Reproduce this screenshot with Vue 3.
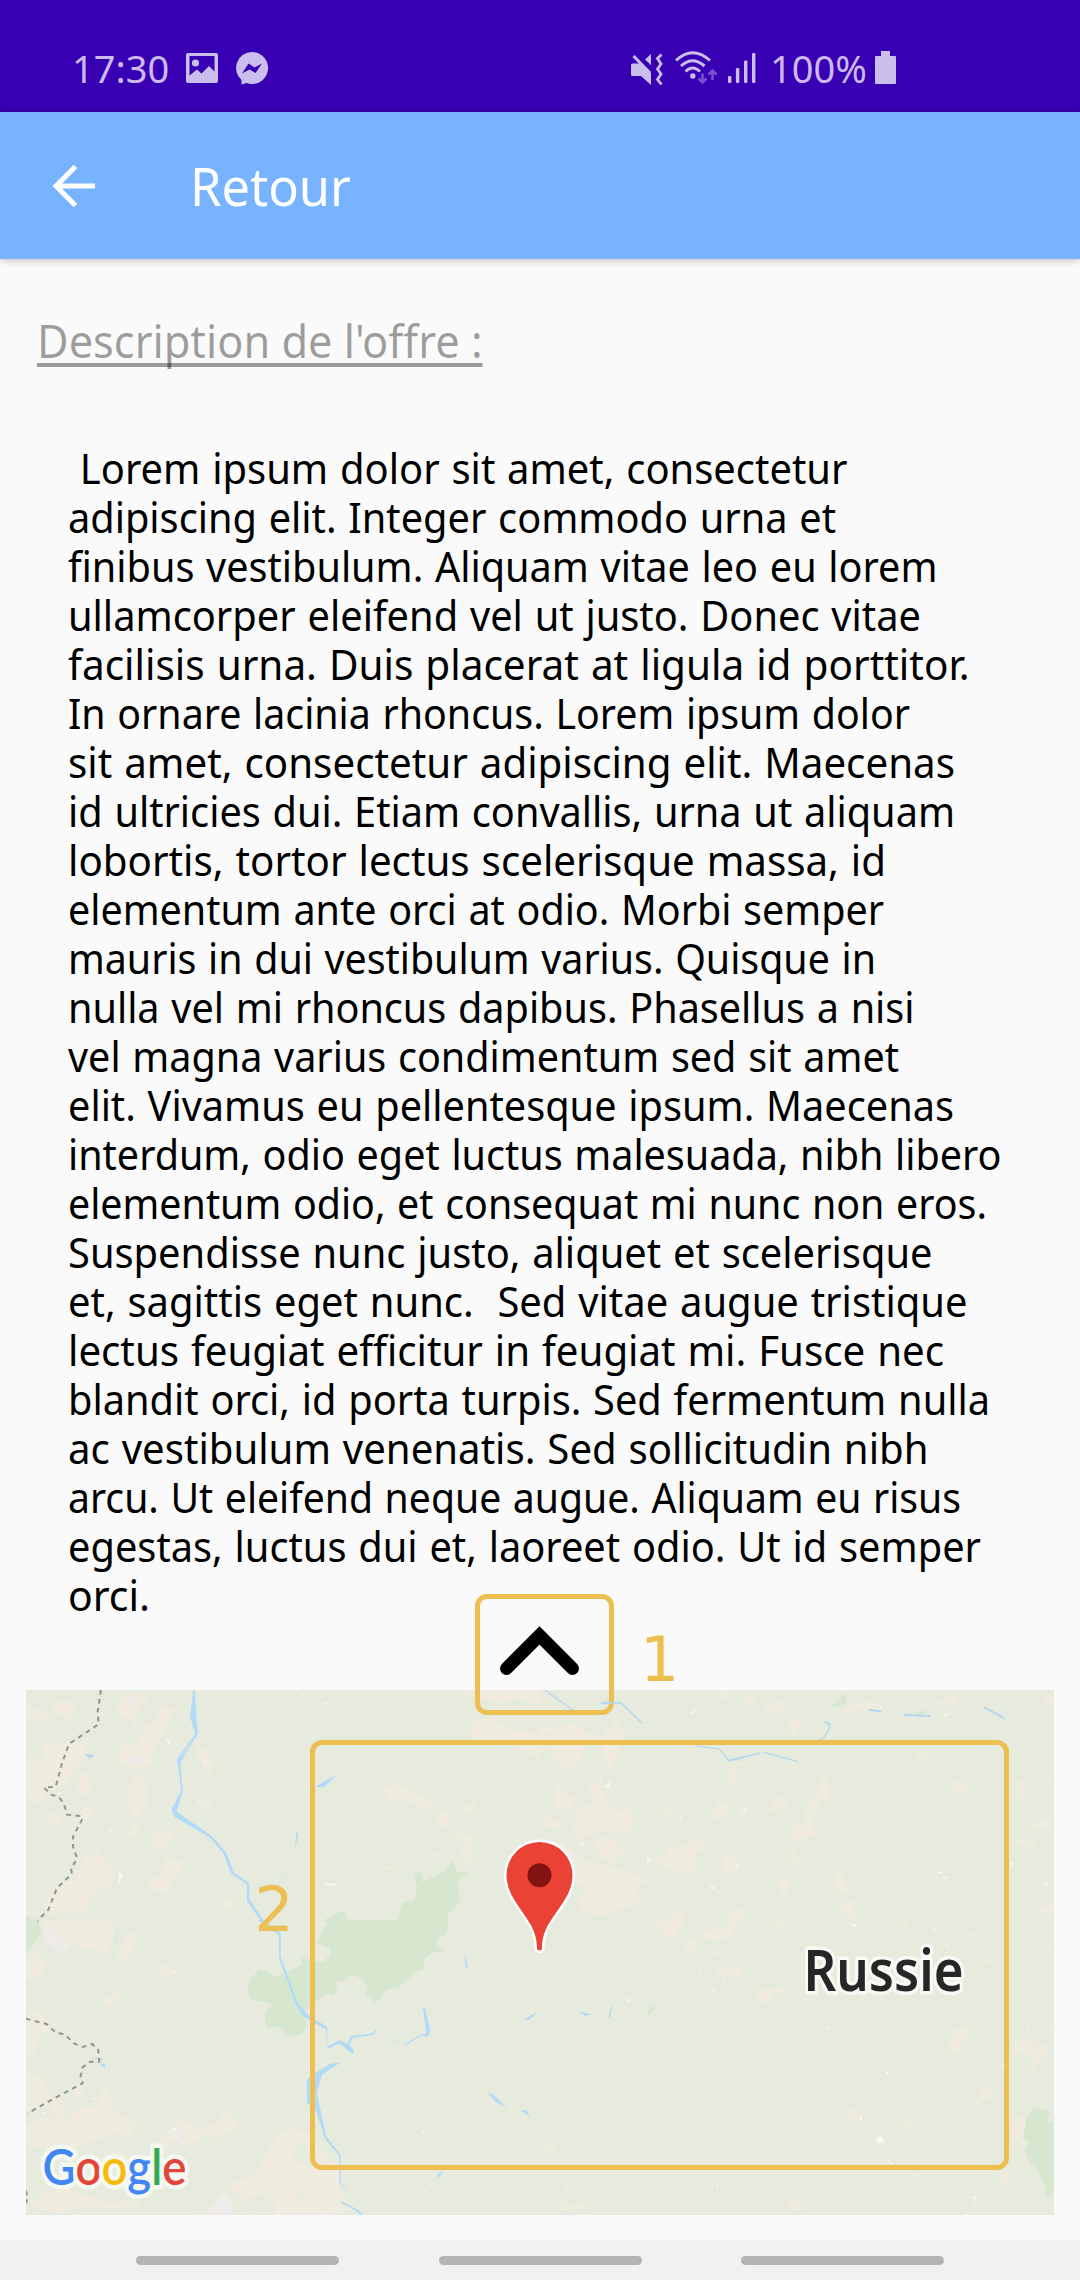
<script setup>
// Stretches a line of text horizontally to the given advance width.
const vFit = {
  mounted(el, { value }) {
    el.style.transform = `scaleX(${value / el.getBoundingClientRect().width})`
  }
}

const lines = [
  [' Lorem ipsum dolor sit amet, consectetur', 779.5],
  ['adipiscing elit. Integer commodo urna et', 768],
  ['finibus vestibulum. Aliquam vitae leo eu lorem', 869.5],
  ['ullamcorper eleifend vel ut justo. Donec vitae', 853],
  ['facilisis urna. Duis placerat at ligula id porttitor.', 901.5],
  ['In ornare lacinia rhoncus. Lorem ipsum dolor', 842],
  ['sit amet, consectetur adipiscing elit. Maecenas', 887],
  ['id ultricies dui. Etiam convallis, urna ut aliquam', 887],
  ['lobortis, tortor lectus scelerisque massa, id', 818],
  ['elementum ante orci at odio. Morbi semper', 816],
  ['mauris in dui vestibulum varius. Quisque in', 808],
  ['nulla vel mi rhoncus dapibus. Phasellus a nisi', 846.5],
  ['vel magna varius condimentum sed sit amet', 831],
  ['elit. Vivamus eu pellentesque ipsum. Maecenas', 886],
  ['interdum, odio eget luctus malesuada, nibh libero', 933.5],
  ['elementum odio, et consequat mi nunc non eros.', 919],
  ['Suspendisse nunc justo, aliquet et scelerisque', 864.5],
  ['et, sagittis eget nunc.  Sed vitae augue tristique', 899.5],
  ['lectus feugiat efficitur in feugiat mi. Fusce nec', 876],
  ['blandit orci, id porta turpis. Sed fermentum nulla', 922],
  ['ac vestibulum venenatis. Sed sollicitudin nibh', 860.5],
  ['arcu. Ut eleifend neque augue. Aliquam eu risus', 893],
  ['egestas, luctus dui et, laoreet odio. Ut id semper', 913],
  ['orci.', 82]
]
</script>

<template>
  <div class="screen">
    <header class="status">
      <span v-fit="96" class="st clock">17:30</span>
      <svg class="i-img" width="32" height="30" viewBox="0 0 32 30">
        <path fill-rule="evenodd" d="M2 0H30Q32 0 32 2V28Q32 30 30 30H2Q0 30 0 28V2Q0 0 2 0ZM3.500 3V22.500L11 16.500L15.500 20.500L23 13L28.500 18.500V3Z" />
        <circle cx="9.500" cy="10" r="3.600" />
      </svg>
      <svg class="i-msg" width="32" height="33" viewBox="0 0 32 33">
        <path d="M16 0A16 16 0 1 1 10.500 31L5.500 32.500L5.500 28A16 16 0 0 1 16 0Z" />
        <path class="cut" d="M6 21.500L12.500 11.500L18.500 15.500L26 11.500L19.500 21L13.500 17.500Z" />
      </svg>
      <span class="grow"></span>
      <svg class="i-mute" width="32" height="33" viewBox="0 0 32 33">
        <path d="M0 12Q0 10.500 1.500 10.500H8.500L20 20V32L10 23H1.500Q0 23 0 21.500ZM14 6.500L20 1V12Z" />
        <path class="ln" d="M2.500 3L19 20" stroke-width="3" />
        <path class="ln" d="M30.500 1.500L26.500 5.500L30 11L26.500 16L30 21L26.500 26.500L30.500 31.500" stroke-width="2.800" />
      </svg>
      <svg class="i-wifi" width="42" height="33" viewBox="0 0 42 33">
        <path class="ln" stroke-width="3" d="M1 9.500Q17.500 -6 35 9.500M6 15Q17.500 4.500 29.500 15M10.500 20.500Q17.500 13.500 25 20.500" />
        <circle cx="17.800" cy="25" r="2.700" />
        <path class="ln dim" stroke-width="2.600" d="M27.500 22.500V31M23.500 27.500L27.500 31.500L31.500 27.500M37.500 29V20M33.500 23.500L37.500 19.500L41.500 23.500" />
      </svg>
      <svg class="i-sig" width="28" height="30" viewBox="0 0 28 30">
        <rect y="23" width="3.400" height="7" rx="1" /><rect x="7.900" y="15" width="3.400" height="15" rx="1" />
        <rect x="16" y="7.500" width="3.400" height="22.500" rx="1" /><rect x="24" width="3.400" height="30" rx="1" />
      </svg>
      <span v-fit="101" class="st pct">100%</span>
      <svg class="i-bat" width="21" height="33" viewBox="0 0 21 33">
        <path d="M6 0H15V5H20Q21 5 21 6V32Q21 33 20 33H1Q0 33 0 32V6Q0 5 1 5H6Z" />
      </svg>
    </header>

    <nav class="bar">
      <svg width="42" height="42" viewBox="0 0 42 42">
        <path d="M22.500 1.500L3 21L22.500 40.500M3 21H42" fill="none" stroke="#fff" stroke-width="5" />
      </svg>
      <span v-fit="161" class="bar-title">Retour</span>
    </nav>

    <main>
      <div class="heading"><span v-fit="445.500">Description de l'offre :</span></div>
      <div class="text">
        <div v-for="[t, w] in lines" :key="t" class="line"><span v-fit="w">{{ t }}</span></div>
      </div>

      <div class="map">
        <svg class="canvas" width="1028" height="525" viewBox="0 0 1028 525">
          <rect width="1028" height="525" fill="#e6ebdd" />
          <!-- north-west quadrant -->
          <g transform="translate(-26 -130) scale(.34438 .33333)">
            <g fill="#efebdf">
              <path d="M75 420L110 450L150 470L140 480L75 475ZM155 425L215 422L222 450L205 480L160 460ZM355 400L450 392L400 450L395 490L345 465L340 435ZM470 435L508 445L480 510L445 570L440 610L400 635L345 605L342 560L400 545L420 500L450 485ZM115 540L160 560L200 545L250 550L252 600L215 630L200 665L140 700L110 735L75 710V600L130 590ZM235 630L260 655L265 705L220 700ZM395 640L425 670L425 740L395 772L368 740L372 690ZM572 548L600 570L620 620L615 645L600 640L575 590ZM575 725L605 722L622 740L605 750ZM140 755L175 775L180 790L160 800L135 780ZM255 735L278 745L240 790L210 780ZM390 782L410 810L390 838L370 825ZM445 820L500 812L505 835L470 865L440 868L440 845ZM283 870L340 945L325 975L265 1000L250 1055L190 1050L160 1075L125 1040L160 980L215 950L240 900ZM480 895L540 905L505 960L480 1000L445 990L425 965L470 940ZM660 1012L683 1030L660 1050L643 1035Z" />
              <path d="M1310 390H1568V435L1500 415L1440 430L1390 415ZM1375 485L1430 470L1470 505L1568 520V600L1500 560L1390 540L1362 520ZM1180 392H1222L1205 418ZM1110 690L1155 672L1210 700L1265 735L1220 750L1180 715L1140 730ZM1280 750L1308 760L1305 785L1280 810L1268 790ZM1325 820L1370 825L1372 880L1358 910L1338 900L1345 850ZM1110 925L1155 912L1135 932ZM1380 720L1385 740L1350 765L1340 750Z" />
            </g>
            <path fill="#efebe8" d="M375 410L410 405L365 445ZM370 600L395 585L415 600L390 620Z" />
            <path fill="#d7e7cf" d="M940 1080L1000 1050L1010 1080ZM1150 1090L1168 1030L1202 1020L1210 980L1202 935L1227 940V965L1290 935L1314 902L1330 937L1362 935L1330 965L1336 1025L1300 1060L1305 1090ZM75 1065L100 1080H75Z" />
            <g fill="#b0daf8">
              <path d="M561 390L566 391L570 470L574 522L526 605L524 625L531 690L513 755L615 828L657 878L679 938L724 970L724 1016L765 1080H755L717 1022L717 973L672 942L650 882L608 832L508 772L498 750L526 690L518 625L513 600L567 522L552 470Z" />
              <path d="M247 582L275 585L261 597ZM914 682L940 665L977 645L942 680ZM860 820L867 816L863 840L857 864Z" />
            </g>
            <path fill="#e6ebdd" d="M563 538L530 590L526 595L545 560Z" />
            <path fill="none" stroke="#b9dcef" stroke-width="2" d="M824 948L806 975" />
            <path class="speck" d="M380 490L398 508L392 508ZM482 530L495 545L488 556ZM716 563L744 580L738 580ZM935 428L953 426L945 433ZM872 406L890 401L880 408ZM1244 452L1250 445L1248 456ZM588 600L600 608L596 615ZM1252 882L1275 880L1260 886ZM938 972L958 970L980 973L965 978ZM345 940L358 938L345 975ZM165 700L178 693L170 706ZM571 728L583 722L580 730ZM805 598V612H802ZM730 615L726 645L729 643ZM1003 742L1006 750L1000 748ZM312 808L333 813L325 816ZM1278 625L1283 632L1277 630ZM490 403L498 410L492 410Z" />
            <path class="border" d="M293 390L283 460L287 492L200 552L180 610L162 680L128 683L148 704L170 710L185 730L195 764L235 768L240 775L212 830L212 860L224 895L207 925L208 942L165 985L140 1050L108 1082L112 1115L82 1135" />
          </g>
          <!-- south-west quadrant -->
          <g transform="translate(-26 230) scale(.34438 .33333)">
            <g fill="#efebdf">
              <path d="M125 0H325L328 70L305 95L240 85L210 70L180 90L150 70L115 30ZM375 40L402 45L385 85L355 130L340 115L355 70ZM75 110L100 95L130 115L125 170L75 178ZM460 138L480 130L510 155L490 172L458 158ZM295 245L330 220L352 222L345 240L315 262ZM75 290L110 268L150 330L110 350L100 400L75 418ZM75 460L120 465L130 500L160 535L185 540L185 600L160 590L150 560L120 560L110 580L75 570ZM210 495L260 490L218 545ZM300 500L320 515L322 560L380 605L410 610L370 650L335 640L215 680L130 690L75 670V615L130 590L190 600L240 560L280 560ZM655 568L685 600L690 628L650 640L630 665L600 640L565 668L530 680L535 640L500 660L470 700L440 690L480 640L520 600L580 625L635 605Z" />
              <path d="M850 625L905 640L925 690L990 740L988 800L1020 865L975 884H795L800 850L760 820L715 840L690 815L655 800L690 780L740 770L770 700L820 635ZM180 800L270 830L320 850L410 840L400 860L290 865L230 860L180 884L100 862L90 845L130 820ZM290 715L330 690L370 705L360 730L310 735ZM560 884L620 868L600 884Z" />
            </g>
            <path fill="#efebe8" d="M130 15L180 65L210 85L165 95L130 55ZM490 630L515 625L545 680L520 670ZM650 815L680 855L670 884H590L620 855ZM75 620L105 660L90 665L75 650Z" />
            <path fill="#e6ebdd" d="M870 660L905 700L900 740L850 720ZM875 808L890 840L858 835Z" />
            <path fill="#d7e7cf" d="M75 0H108L122 35L75 98ZM918 70L950 10L938 0H1302L1298 40L1268 58L1270 75L1290 95L1255 98L1235 115L1228 150L1212 152L1165 195L1160 205L1122 208L1100 242L1088 247L1065 225L1060 215L1068 210L1052 178L1020 162L1005 182L970 188L982 208L965 228L945 220L915 247L888 272L890 318L880 338L853 353L828 342L808 320L775 323L769 305L770 275L797 250L735 243L722 228L720 200L728 175L755 147L802 170L875 135V112L905 122L940 125L962 98L958 85Z" />
            <g fill="#b0daf8">
              <path d="M748 0H765L815 40V110L865 250L900 290L950 320V380L985 360L1008 372L1020 347L1080 341L1101 321L1083 345L1024 353L1014 375L1028 390L1024 403L985 370L950 388L946 328L905 304L880 288L857 250L810 115V45Z" />
              <path d="M990 427L958 448L934 465L920 520L948 650L989 704V788L1013 818L985 790V708L944 656L918 575L891 548V480L910 462L958 432ZM345 0L339 60L334 88L340 40ZM1228 264H1234L1250 330L1242 350L1225 346L1172 380L1175 373L1225 342H1238L1236 325ZM1350 100L1357 130L1359 147L1351 138ZM1417 520L1430 522L1473 564L1440 545ZM1512 570H1528L1540 591ZM1522 298L1562 275L1536 300ZM1288 750L1280 765L1266 779L1274 760ZM992 844L1040 870L1055 884H1045L1035 873L990 848ZM272 414H298L295 422ZM290 433L308 430L303 444Z" />
            </g>
            <path fill="none" stroke="#b9dcef" stroke-width="2" d="M1138 352L1160 370" />
            <path class="speck" d="M390 365L402 370L395 372ZM778 496L792 508L785 505ZM575 450L582 458L576 458ZM1225 632L1235 625L1230 638ZM1326 616H1336V619H1326ZM1250 790L1258 798L1253 802ZM500 158L508 148L506 158ZM355 130L362 135L357 139ZM265 533L280 536L272 540ZM500 628L515 621L508 633ZM1472 58L1492 55L1480 60ZM1343 518L1348 526L1344 524ZM735 872L743 875L738 877ZM940 884L948 878V884ZM733 298L740 305L735 303ZM120 580L137 576L125 584ZM280 392L288 405L278 405Z" />
            <path class="border" d="M75 296L135 312L162 338L188 343L215 370L240 381L268 372L285 390L288 425L262 425L240 442L234 470L240 490L170 528L80 580M75 812L80 830L76 850" />
          </g>
          <!-- north-east quadrant -->
          <g transform="translate(514 -130) scale(.34438 .33333)">
            <g fill="#efebdf">
              <path d="M0 500L55 505L100 485L130 515L165 535L135 565L110 600L80 640L50 610L30 570L0 560ZM175 535L220 480L250 520L235 565L205 632L185 590ZM45 670L100 715L95 745L40 750ZM140 670H175L190 720L220 750L240 760L270 735L270 800L255 825L170 810L110 840L85 825L105 785L95 755L150 730ZM0 830L90 860L130 910L180 870L150 850L200 825L250 880L200 915L270 945L320 960L280 985L290 1030L220 1050L180 1068L120 1050L105 1025L135 990L95 960L60 880L0 860ZM10 765L60 790L55 810L5 795ZM310 895L360 890L375 865L440 850V825L490 850L450 885L460 930L400 940ZM490 765L520 725L560 735L540 770L510 780ZM570 760L595 750L602 770L585 782ZM670 720L720 708L725 725L690 755L660 750L680 735ZM825 635L840 680L842 725L815 725L795 760L790 795L810 830L780 825L745 850L720 820L735 795L770 785L775 735L805 715ZM530 885L570 895L575 925L545 940L528 920ZM865 935L885 945L890 980L918 1000L865 995L850 960ZM715 885L735 870L752 890L740 910ZM1190 675L1215 658L1248 680L1225 712L1205 700ZM1382 668L1415 662L1395 722L1382 715ZM1425 795L1492 765L1475 800L1445 810ZM1385 835L1440 850L1435 868L1382 855ZM1460 400L1492 405V438L1465 425ZM1150 430L1190 402L1218 405L1200 432L1165 438ZM870 450L920 432L970 422L998 440L990 455L930 448L890 462ZM590 415L620 402L630 425L605 435ZM645 425L670 435L708 415L705 450L680 465L660 455ZM720 475L758 480L740 530L730 530ZM1090 605L1100 575L1140 595ZM500 390H555L530 425ZM540 625L575 630L570 675L550 668ZM550 615L640 595L610 615ZM860 1035L910 1030L920 1080H900ZM1450 1040L1492 1035V1065L1455 1060ZM540 1060L580 1045L600 1065L570 1080H550ZM690 965L728 960L715 1005L695 995ZM385 1055L420 1065L415 1080H385ZM350 740L390 755L375 770ZM320 575L350 560L335 585Z" />
            </g>
            <path fill="#e6ebdd" d="M140 900L175 890L200 910L170 920Z" />
            <path fill="#d7e7cf" d="M836 446L889 400V433ZM1090 460L1123 450L1115 467Z" />
            <g fill="none" stroke="#b4d9ef" stroke-width="4">
              <path d="M15 391L100 454M810 540L826 532L843 500L828 484M450 557L522 567L549 603L640 579M650 577L750 605" />
              <path stroke-width="6" d="M549 602L590 591M826 485L842 494M955 449L993 455M1055 464L1135 469M1290 442L1349 475" />
            </g>
            <path class="speck" d="M435 460L453 444L445 460ZM180 680L200 670L205 655L203 684ZM168 662L180 660L176 668ZM310 890L322 902L312 912ZM116 845L135 850L122 857ZM585 740L600 747L597 756ZM567 912L580 913L572 922ZM493 975L511 985L500 988ZM1170 468L1188 456L1180 468ZM1467 666L1492 670L1475 670ZM1363 905L1374 908L1366 922ZM1152 936L1170 937L1160 941ZM1165 950L1190 953L1175 956ZM1464 965L1475 968L1468 977ZM405 765L412 775L408 782ZM15 495L22 508L18 515ZM1093 735L1118 733L1105 737ZM1315 1010L1320 1020L1316 1022ZM915 740L922 743L916 745ZM355 738L362 733L360 740ZM325 840L340 835L330 842ZM407 570L435 583L425 580ZM895 1026L915 1028L905 1030Z" />
          </g>
          <!-- south-east quadrant -->
          <g transform="translate(514 230) scale(.34438 .33333)">
            <g fill="#efebdf">
              <path d="M330 0H425L380 60L345 25ZM480 35L550 15L545 0H575L560 45L520 65L475 55ZM425 60L455 55L460 80L440 105L422 90ZM490 92L548 96L510 108ZM500 155L545 138L590 142L585 170L545 165L530 195L525 170ZM628 205L665 210L705 195L712 215L680 222L655 252L630 235ZM685 0H720L695 25ZM1050 0H1072L1062 28ZM1275 125L1300 110L1315 122L1290 132ZM1195 345L1225 322L1248 325L1240 350L1218 370L1222 385L1208 405L1188 385ZM1385 358L1430 360L1440 380L1472 375L1475 405L1445 435L1430 462L1422 450L1435 425L1410 395L1365 412ZM1275 518L1300 505L1325 520L1320 535H1280ZM1258 540L1275 533L1282 550L1265 560ZM885 580L905 565L930 585L925 600L895 597ZM1038 605L1080 602L1075 625ZM1370 600L1395 590L1412 605L1402 655L1420 668L1405 688L1390 665L1368 668ZM1335 755H1358L1355 795L1333 790ZM1380 775L1388 765L1395 780ZM712 850L735 835L763 855L755 872L735 868ZM45 825L70 835L80 860L115 845L140 865L100 865L95 882L65 865ZM15 680L45 672L50 690L20 705ZM1470 320L1492 308V330H1475ZM1455 80L1492 78V90Z" />
            </g>
            <path fill="#d7e7cf" d="M1433 560L1482 573L1470 605H1492V820L1470 834L1467 800L1440 737L1422 728L1408 688L1420 668L1402 655L1412 600ZM320 257L337 265L311 289Z" />
            <path fill="#b4d9ef" d="M110 273L151 283L133 288ZM213 252L203 293H199L202 275Z" />
            <path class="speck" d="M975 660L990 648L1000 668H988L978 668ZM1028 735L1005 712L1015 728ZM1435 30L1455 45L1442 40ZM505 270L524 284L512 278ZM498 203L508 215L505 220ZM308 208L313 196L312 208ZM250 240L264 236L262 248ZM792 306L805 297L798 306ZM828 325L845 317L838 325ZM1002 462L1008 452L1014 462ZM1010 563L1027 538L1018 555ZM945 535L951 555L947 557ZM1045 520L1055 510L1050 522ZM928 600L935 585V600ZM1080 765L1098 769H1085ZM513 790L518 793L516 808ZM502 852L511 838L508 848ZM1065 855L1070 862L1063 863ZM1255 832L1272 828L1262 840ZM1258 856L1268 848L1263 858ZM1232 884L1243 878V884ZM60 790L88 815L80 812ZM1140 20L1150 27L1145 32ZM985 352L1000 362L992 360ZM1410 335L1418 318L1414 335ZM690 698L700 692L695 700ZM0 780L10 785L8 790ZM237 437L243 428L240 438ZM492 437L497 428L496 440ZM1338 435H1348V443ZM460 155L470 157L466 161ZM1175 70L1188 78L1180 80ZM900 15L920 13L915 20ZM1198 338L1218 328L1208 338ZM1250 35L1268 48L1258 45ZM1240 582L1253 580L1248 585ZM1400 233L1406 240L1402 244Z" />
          </g>
          <text class="country" x="777.500" y="300.500" textLength="160" lengthAdjust="spacingAndGlyphs">Russie</text>
          <g class="logo">
            <text x="16.500" y="495" textLength="144" lengthAdjust="spacingAndGlyphs"><tspan fill="#4285f4">G</tspan><tspan fill="#e2453a">o</tspan><tspan fill="#f9bb0b">o</tspan><tspan fill="#4285f4">g</tspan><tspan fill="#34a853">l</tspan><tspan fill="#e2453a">e</tspan></text>
          </g>
          <path class="pin" d="M480.500 185C480.500 192 482.500 199 485.500 205C497 226 511 236 511 258Q511 260.500 513.500 260.500T516 258C516 236 530 226 541.500 205C544.500 199 546.500 192 546.500 185A33 33 0 0 0 480.500 185Z" />
          <circle cx="513.500" cy="185.300" r="12" fill="#821411" />
        </svg>

        <div class="mark one">
          <svg width="79" height="52" viewBox="0 0 79 52">
            <path d="M6.500 42.500L39.500 9.500L72.500 42.500" fill="none" stroke="#000" stroke-width="13" stroke-linecap="round" />
          </svg>
        </div>
        <div class="mark two"></div>
        <svg class="brook" width="45" height="34" viewBox="0 0 45 34">
          <path d="M0 10H20L41 30" fill="none" stroke="#b4d9ef" stroke-width="1.600" />
          <path d="M0 10L5 8.500H9V11L0 11.500Z" fill="#b4d9ef" />
        </svg>
        <span class="num n1">1</span>
        <span class="num n2">2</span>
      </div>
    </main>

    <footer class="keys"><i></i><i></i><i></i></footer>
  </div>
</template>

<style>
body { margin: 0; }
</style>

<style scoped>
.screen {
  width: 1080px;
  height: 2280px;
  display: flex;
  flex-direction: column;
  background: #fafafa;
  font-family: "Noto Sans", "Open Sans", sans-serif;
  overflow: hidden;
}
.screen span { white-space: pre; }
.status {
  height: 112px;
  box-sizing: border-box;
  padding: 51px 184px 0 72px;
  display: flex;
  align-items: flex-start;
  background: #3700b3;
  color: #cdb8f2;
}
.status svg { fill: #cbbdec; flex: none; overflow: visible; }
.status .ln { fill: none; stroke: #cbbdec; }
.status .dim { stroke: #7a4fd0; }
.status .cut { fill: #3700b3; }
.st { font-size: 38px; line-height: 38px; transform-origin: 0 0; flex: none; }
.clock { width: 96px; margin-top: -2px; }
.i-img { margin: 2px 0 0 18px; }
.i-msg { margin: 1px 0 0 18px; }
.grow { flex: 1; }
.i-mute { margin-top: 2px; }
.i-wifi { margin-left: 12px; }
.i-sig { margin: 2px 0 0 11px; }
.pct { width: 101px; margin: -2px 0 0 14px; }
.i-bat { margin-left: 4px; }
.bar {
  height: 147px;
  box-sizing: border-box;
  padding-left: 53px;
  display: flex;
  align-items: center;
  flex: none;
  background: #77b3ff;
  box-shadow: 0 1px 8px rgba(0, 0, 0, .25);
}
.bar-title {
  margin: 1px 0 0 94.500px;
  font-size: 52px;
  line-height: 70px;
  color: #fff;
  transform-origin: 0 0;
}
main { flex: 1; display: flex; flex-direction: column; }
.heading {
  margin: 51px 0 0 37px;
  height: 60px;
  font-size: 45.500px;
  line-height: 60px;
  color: rgba(0, 0, 0, .38);
}
.heading span {
  display: inline-block;
  transform-origin: 0 0;
  text-decoration: underline;
  text-decoration-thickness: 4px;
  text-underline-offset: 5px;
  text-decoration-skip-ink: none;
}
.text { margin: 74px 0 0 68px; font-size: 41px; word-spacing: 1.500px; color: #000; }
.line { height: 49px; line-height: 49px; }
.line span { display: inline-block; transform-origin: 0 0; }
.map { position: relative; width: 1028px; height: 525px; margin: 70px 0 0 26px; }
.canvas { display: block; }
.border { fill: none; stroke: #92968d; stroke-width: 6; stroke-dasharray: 14 13; }
.speck { fill: #fbfbf9; opacity: .8; }
.country {
  font: 600 57px "Noto Sans", sans-serif;
  fill: #262626;
  stroke: #f8f9f4;
  stroke-width: 7;
  stroke-linejoin: round;
  paint-order: stroke;
}
.logo text {
  font: 600 49px Lato, sans-serif;
  stroke: #f5f7f1;
  stroke-width: 9;
  stroke-linejoin: round;
  paint-order: stroke;
}
.pin { fill: #ea4335; stroke: #fff; stroke-width: 5; paint-order: stroke; }
.mark { position: absolute; box-sizing: border-box; border: 5px solid #edbe50; border-radius: 12px; }
.one { left: 449px; top: -96px; width: 139px; height: 121px; padding: 27px 0 0 20px; }
.one svg { display: block; overflow: hidden; }
.two { left: 284px; top: 50px; width: 699px; height: 430px; }
.brook { position: absolute; left: 575px; top: 3px; }
.num {
  position: absolute;
  font: 61.500px/72px "DejaVu Sans", sans-serif;
  color: #edbe50;
}
.n1 { left: 614px; top: -66px; }
.n2 { left: 228.500px; top: 184px; }
.keys {
  height: 40px;
  flex: none;
  box-sizing: border-box;
  padding: 0 136px;
  display: flex;
  justify-content: space-between;
  align-items: center;
  background: #f1f1f1;
}
.keys i { width: 203px; height: 9px; border-radius: 5px; background: #b4b4b4; }
</style>
